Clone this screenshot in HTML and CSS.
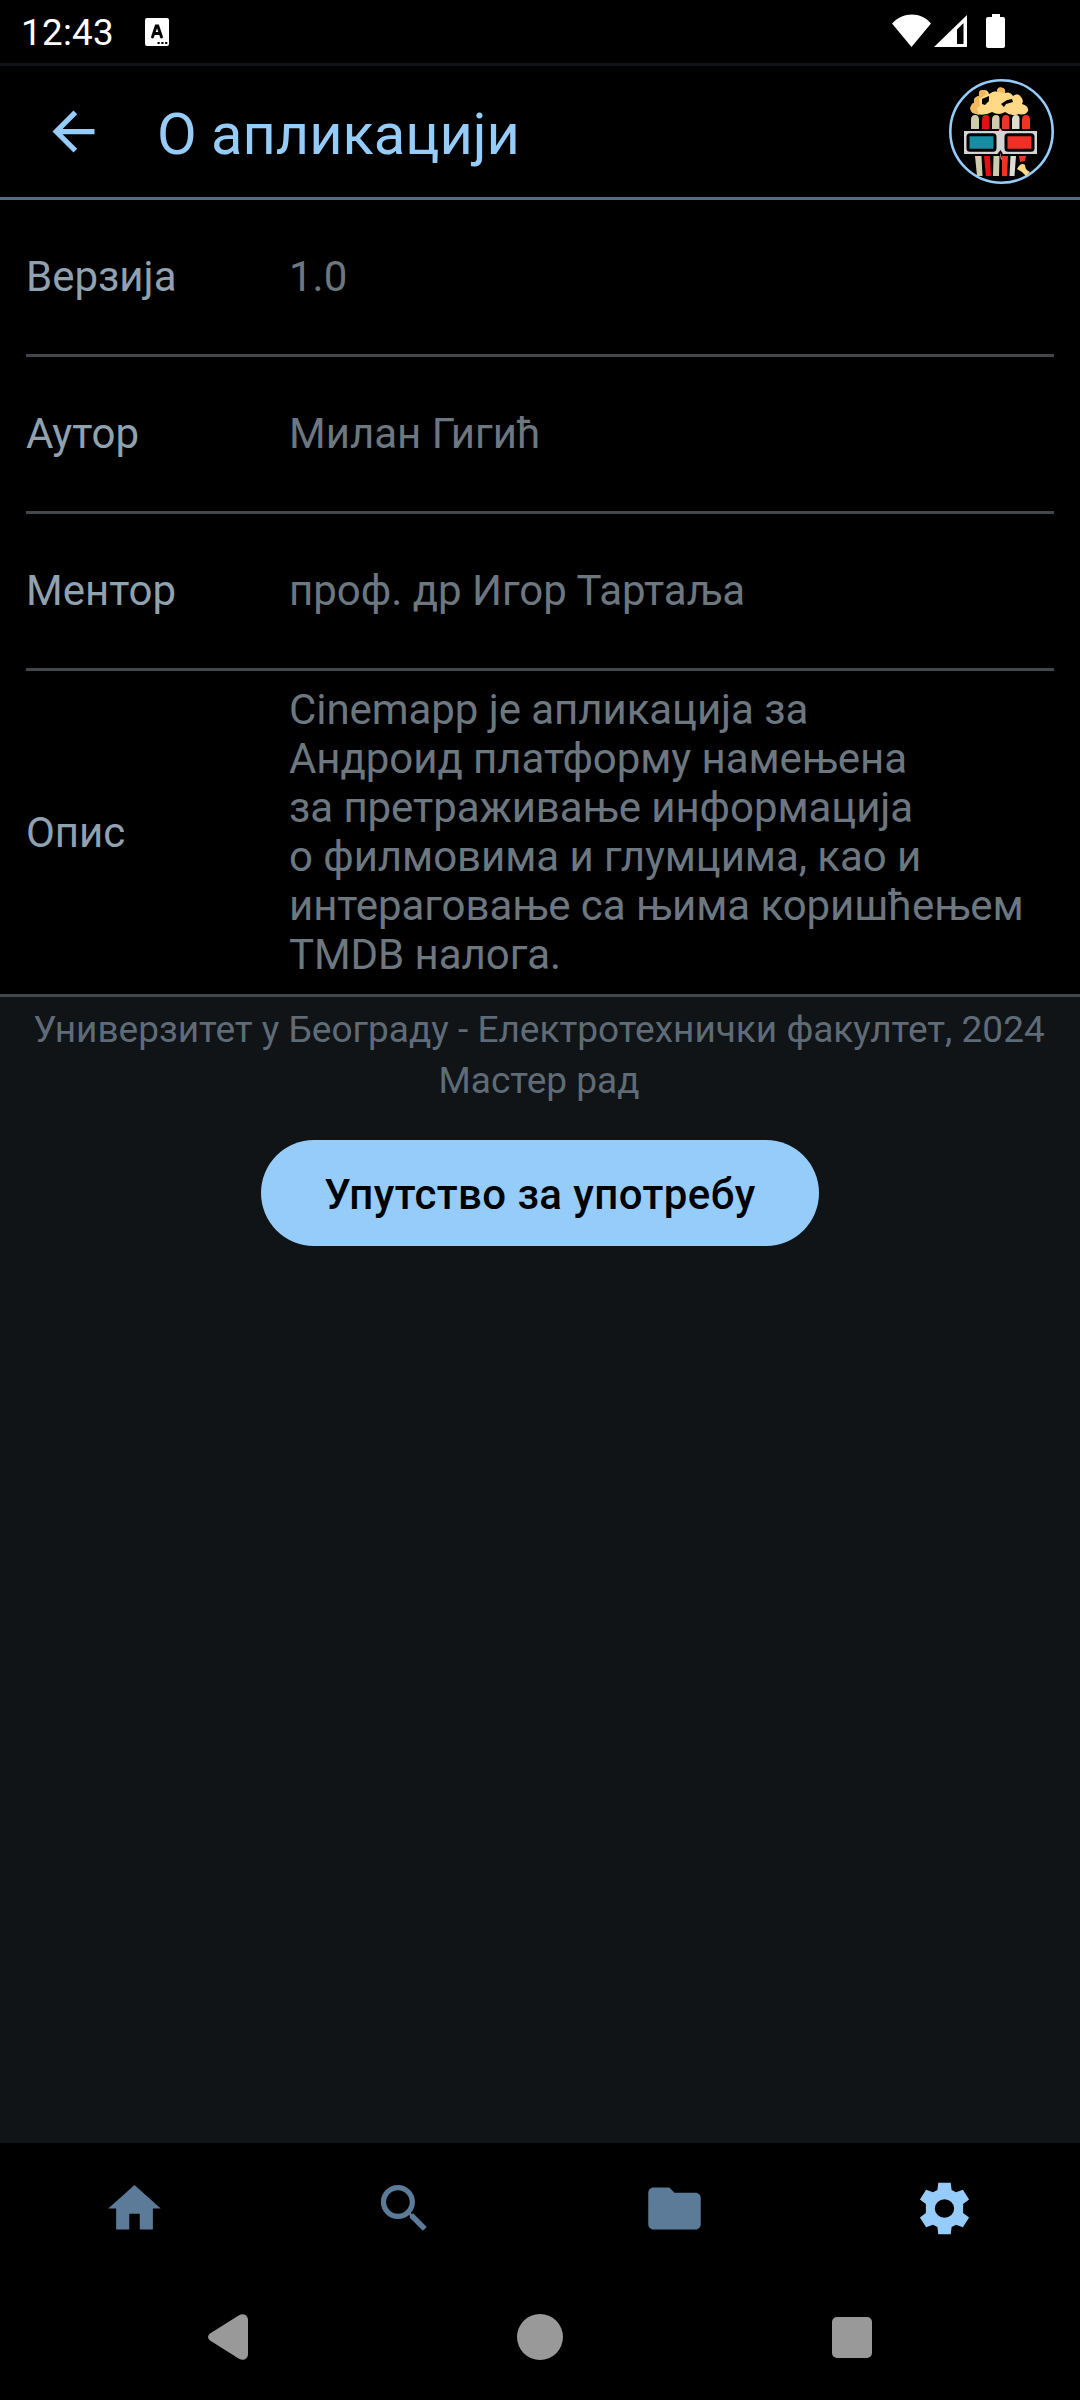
FILE: index.html
```html
<!DOCTYPE html>
<html lang="sr">
<head>
<meta charset="utf-8">
<title>О апликацији</title>
<link rel="stylesheet" href="styles.css">
</head>
<body>
<div class="screen">
  <div class="status">
    <span class="clock">12:43</span>
    <svg class="keyboard" width="24" height="28" viewBox="0 0 24 28"><rect width="24" height="28" rx="2" fill="#fff"/><path d="M7.500 19 11.200 8h1.600L16.500 19M9 15.500h6" fill="none" stroke="#000" stroke-width="2.900" stroke-linecap="round"/><path d="M12.500 25h2.200m1.600 0h2.200m1.600 0h2.200" stroke="#000" stroke-width="2.200"/></svg>
    <svg class="signals" width="120" height="36" viewBox="0 0 120 36" fill="#fff"><path d="M0 9.500C11-2.500 29-2.500 39 9.500L19.500 33z"/><path fill-rule="evenodd" d="M42 33 75 1v32zM65 30H71.500V9L65 15.500z"/><path d="M100 0h8v3h3q2 0 2 2v27q0 2-2 2H96q-2 0-2-2V5q0-2 2-2h4z"/></svg>
  </div>
  <header class="topbar">
    <svg class="back" width="63" height="63" viewBox="0 0 24 24" fill="#96ccf9"><path d="M20 11H7.830l5.590-5.590L12 4l-8 8 8 8 1.410-1.410L7.830 13H20v-2z"/></svg>
    <h1 class="title">О апликацији</h1>
    <svg class="logo" width="105" height="105" viewBox="0 0 105 105">
      <circle cx="52.500" cy="52.500" r="51.200" fill="#000" stroke="#96ccf9" stroke-width="2.600"/>
      <path fill="#ffd986" d="M24 34Q20 31 22 27Q23 24 25 24Q24 18 30 17Q29 10 35 11Q39 11 40 15Q46 11 48 13Q48 8 52 8.500Q57 9 56 14Q61 12 64 17Q69 13 72 18Q75 21 73 25Q80 27 79 32Q76 37 70 35Q63 38 56 33Q50 37 43 33Q34 38 24 34z"/>
      <path fill="#f0b95b" d="M24 34Q20 31 22 27Q23 24 25 24Q24 18 30 17Q29 10 35 11L38 15L30 20L31 27L28 29L30 36zM48 13Q48 8 52 8.500Q57 9 56 14z"/>
      <path d="M33 20l7-3v5l-4 4-3-1zM52 25l6-4 5-1 1 3-7 2-2 3z"/>
      <path fill="#ceccac" d="M22 50V41q0-5 4-5t4 5v9zM43 50V41q0-5 4-5t3.500 5v9zM26 77h6.500l1 20h-5.500zM44.500 77h6l-.5 20h-6z"/>
      <path fill="#deddd0" d="M63 50V41q0-5 4-5t3.500 5v9zM61.500 77h5.500l-1.500 20h-5z"/>
      <path fill="#e30f12" d="M33 50V41q0-5 4-5t3.500 5v9zM35 77h6l1 20h-5z"/>
      <path fill="#ee3327" d="M53 50V41q0-5 4-5t3.500 5v9zM73 50V41q0-5 4-5t4 5v9zM53 77h6l-1 20h-5zM70 77h7l-1 5-5 1z"/>
      <path fill="#d4d4d4" d="M15 52h73v23H54l-2.500-4-3 4H15z"/>
      <path fill="#f5a89c" d="M51 49l2.500 3h-4zM51 73l2.500 9-2-3z"/>
      <rect x="19" y="55.800" width="27" height="15.500" rx="2" fill="#168da2" stroke="#000" stroke-width="3"/>
      <rect x="57" y="55.800" width="27" height="15.500" rx="2" fill="#ee3027" stroke="#000" stroke-width="3"/>
      <path fill="#ffd986" d="M68 90q4-7 8-4 0 5 5 7l-4 4-4-4z"/>
    </svg>
  </header>
  <main class="details">
    <div class="row"><span class="label">Верзија</span><span class="value">1.0</span></div>
    <div class="row"><span class="label">Аутор</span><span class="value">Милан Гигић</span></div>
    <div class="row"><span class="label">Ментор</span><span class="value">проф. др Игор Тартаља</span></div>
    <div class="row row-description"><span class="label">Опис</span><span class="value">Cinemapp је апликација за<br>Андроид платформу намењена<br>за претраживање информација<br>о филмовима и глумцима, као и<br>интераговање са њима коришћењем<br>TMDB налога.</span></div>
  </main>
  <section class="about">
    <p class="credit">Универзитет у Београду - Електротехнички факултет, 2024<br>Мастер рад</p>
    <button class="manual">Упутство за употребу</button>
  </section>
  <nav class="tabs">
    <svg class="tab" viewBox="0 0 24 24"><path d="M10 20v-6h4v6h5v-8h3L12 3 2 12h3v8z"/></svg>
    <svg class="tab" viewBox="0 0 24 24"><path d="M15.500 14h-.790l-.280-.270C15.410 12.590 16 11.110 16 9.500 16 5.910 13.090 3 9.500 3S3 5.910 3 9.500 5.910 16 9.500 16c1.610 0 3.090-.590 4.230-1.570l.270.280v.790l5 4.990L20.490 19l-4.990-5zm-6 0C7.010 14 5 11.990 5 9.500S7.010 5 9.500 5 14 7.010 14 9.500 11.990 14 9.500 14z"/></svg>
    <svg class="tab" viewBox="0 0 24 24"><path d="M10 4H4c-1.100 0-1.990.900-1.990 2L2 18c0 1.100.900 2 2 2h16c1.100 0 2-.900 2-2V8c0-1.100-.900-2-2-2h-8l-2-2z"/></svg>
    <svg class="tab tab-active" viewBox="0 0 24 24"><path fill-rule="evenodd" d="M9.300 0.100H14.700L15.100 3.400 17 4.500 20 3.300 22.700 7.900 20.100 9.900V14.100L22.700 16.100 20 20.700 17 19.500 15.100 20.600 14.700 23.900H9.300L8.900 20.600 7 19.500 4 20.700 1.300 16.100 3.900 14.100V9.900L1.300 7.900 4 3.300 7 4.500 8.900 3.400zM12 7.700a4.200 4.300 0 1 0 0 8.600 4.200 4.300 0 0 0 0-8.600z" transform="translate(12 12) scale(.876 .825) translate(-12 -12)"/></svg>
  </nav>
  <div class="system">
    <svg width="40" height="46" viewBox="0 0 40 46"><path d="M2 19.500 31 1.300Q34-.6 37 .7 40 2.500 40 6v34q0 3.500-3 5.300-3 1.300-6-.6L2 26.500Q-2 23 2 19.500z"/></svg>
    <svg width="46" height="46" viewBox="0 0 46 46"><circle cx="23" cy="23" r="23"/></svg>
    <svg width="40" height="41" viewBox="0 0 40 41"><rect width="40" height="41" rx="5"/></svg>
  </div>
</div>
</body>
</html>
```
FILE: styles.css
```css
* { box-sizing: border-box; }
body {
  margin: 0;
  background: #101417;
  font-family: Roboto, sans-serif;
}
.screen {
  display: flex;
  flex-direction: column;
  width: 1080px;
  height: 2400px;
  background: #101417;
}
.status {
  display: flex;
  align-items: flex-start;
  height: 66px;
  padding: 0 68px 0 21px;
  background: #000;
  border-bottom: 3px solid #101417;
}
.clock {
  width: 124px;
  padding-top: 11px;
  font-size: 36.75px;
  line-height: 43px;
  letter-spacing: 0.3px;
  color: #fff;
}
.keyboard { margin-top: 18px; }
.signals { margin: 14px 0 0 auto; }
.topbar {
  display: flex;
  align-items: center;
  height: 134px;
  padding: 0 26px 0 42px;
  background: #000;
  border-bottom: 3px solid #546e85;
}
.title {
  flex: 1;
  margin: 0 0 0 52px;
  padding-top: 4px;
  font-size: 57.75px;
  font-weight: 400;
  line-height: 74px;
  color: #96ccf9;
}
.details {
  padding: 0 26px;
  background: #000;
  border-bottom: 3px solid #42474c;
}
.row {
  display: flex;
  align-items: center;
  height: 157px;
  padding-bottom: 2px;
  font-size: 42px;
  line-height: 49px;
  border-bottom: 3px solid #42474c;
}
.row-description {
  height: 323px;
  padding-bottom: 1px;
  border-bottom: 0;
  letter-spacing: -0.06px;
}
.label { width: 263px; color: #90a1b0; }
.value { color: #6c7780; white-space: nowrap; }
.about {
  flex: 1;
  display: flex;
  flex-direction: column;
  align-items: center;
}
.credit {
  margin: 7px 0 34px;
  padding-right: 2px;
  font-size: 37px;
  line-height: 51px;
  text-align: center;
  white-space: nowrap;
  color: #5f6b76;
}
.manual {
  width: 558px;
  height: 106px;
  padding: 3px 0 0;
  border: 0;
  border-radius: 53px;
  background: #96ccf9;
  color: #000;
  font-family: inherit;
  font-size: 42px;
  font-weight: 500;
  letter-spacing: 0.42px;
  white-space: nowrap;
}
.tabs {
  display: grid;
  grid-template-columns: repeat(4, 1fr);
  justify-items: center;
  height: 131px;
  padding: 34px 1px 0 0;
  background: #000;
}
.tab { width: 63px; height: 63px; fill: #5b7b98; }
.tab-active { fill: #96ccf9; }
.system {
  display: flex;
  align-items: center;
  justify-content: space-between;
  height: 126px;
  padding: 0 208px;
  background: #000;
  fill: #999;
}
```
